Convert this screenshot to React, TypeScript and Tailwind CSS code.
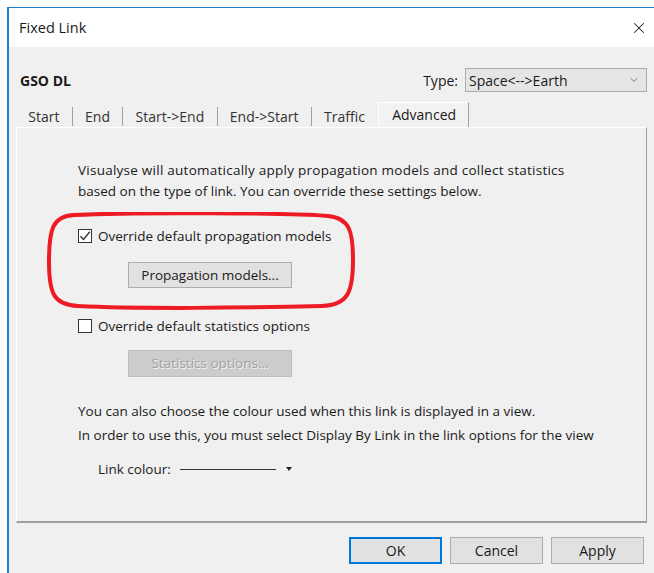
import { ChevronDown, X } from 'lucide-react';

const tabs = ['Start', 'End', 'Start->End', 'End->Start', 'Traffic'];

const CheckBox = ({ checked, label }: { checked?: boolean; label: string }) => (
  <div className="flex items-center h-[20px]">
    <div className="w-[14px] h-[14px] border border-[#333] bg-white flex items-center justify-center">
      {checked && (
        <svg width="12" height="12" viewBox="0 0 12 12">
          <path d="M1.5 6.2 L4.5 9.5 L10.8 1.8" fill="none" stroke="#333" strokeWidth="1.4" />
        </svg>
      )}
    </div>
    <span className="ml-[6px] text-[#1a1a1a]">{label}</span>
  </div>
);

const DialogButton = ({ label, primary }: { label: string; primary?: boolean }) => (
  <button
    className={`h-[27px] w-[93px] bg-[#e1e1e1] text-[14px] text-[#1a1a1a] ${
      primary ? 'border-2 border-[#0078d7]' : 'border border-[#adadad]'
    }`}
  >
    {label}
  </button>
);

export default function App() {
  return (
    <div
      className="w-[654px] h-[573px] bg-white overflow-hidden text-[13.5px] leading-[21px]"
      style={{ fontFamily: '"Open Sans", "Noto Sans", sans-serif' }}
    >
      <div className="ml-[7px] mt-[7px] h-[566px] border-l-2 border-t border-[#1883d7] flex flex-col">
        {/* Title bar */}
        <div className="h-[39px] bg-white flex items-center justify-between pl-[10px] pr-[6px]">
          <span className="text-[14.5px] text-[#1a1a1a]">Fixed Link</span>
          <X className="w-[18px] h-[18px] text-[#222]" strokeWidth={1.4} />
        </div>

        <div className="flex-1 bg-[#f0f0f0] flex flex-col">
          {/* Header row */}
          <div className="flex items-center justify-between pl-[11px] pr-[7px] mt-[21px] h-[24px] text-[14px]">
            <span className="font-bold text-[#1a1a1a]">GSO DL</span>
            <div className="flex items-center">
              <span className="mr-[7px] text-[#1a1a1a]">Type:</span>
              <div className="w-[182px] h-[24px] bg-[#e5e5e5] border border-[#adadad] flex items-center justify-between pl-[3px] pr-[6px]">
                <span className="text-[#1a1a1a]">Space&lt;--&gt;Earth</span>
                <ChevronDown className="w-[12px] h-[12px] text-[#555]" strokeWidth={1.5} />
              </div>
            </div>
          </div>

          {/* Tab strip */}
          <div className="flex items-end ml-[7px] mt-[10px] h-[25px] text-[14px]">
            {tabs.map((t, i) => (
              <div key={t} className="flex items-center h-[21px]">
                <span className="px-[12.3px] text-[#333]">{t}</span>
                {i < tabs.length - 1 && <div className="w-px h-[19px] bg-[#a0a0a0]" />}
              </div>
            ))}
            <div className="h-[26px] ml-[1px] pl-[13px] pr-[12px] pb-[3px] flex items-center bg-[#f2f2f2] border-t border-l border-white border-r border-r-[#a0a0a0] text-[#1a1a1a] relative top-px">
              Advanced
            </div>
          </div>

          {/* Tab page */}
          <div className="ml-[7px] w-[631px] h-[396px] border-t border-l border-white border-r border-r-[#a0a0a0] border-b-2 border-b-[#a0a0a0] pl-[61px] pt-[32px] text-[#1a1a1a] relative">
            <p className="tracking-[0.25px]">Visualyse will automatically apply propagation models and collect statistics</p>
            <p>based on the type of link. You can override these settings below.</p>

            <div className="mt-[24px]">
              <CheckBox checked label="Override default propagation models" />
            </div>
            <div className="mt-[16px] ml-[50px]">
              <button className="h-[26px] w-[164px] bg-[#e1e1e1] border border-[#adadad]">Propagation models...</button>
            </div>

            <div className="mt-[28px]">
              <CheckBox label="Override default statistics options" />
            </div>
            <div className="mt-[14px] ml-[50px]">
              <button className="h-[27px] w-[164px] bg-[#cccccc] border border-[#bfbfbf] text-[#a3a3a3] [text-shadow:1px_1px_0_#f4f4f4]">
                Statistics options...
              </button>
            </div>

            <div className="mt-[22px] leading-[24px]">
              <p>You can also choose the colour used when this link is displayed in a view.</p>
              <p>In order to use this, you must select Display By Link in the link options for the view</p>
            </div>

            <div className="mt-[12px] ml-[20px] flex items-center h-[20px]">
              <span>Link colour:</span>
              <div className="ml-[9px] w-[96px] h-px bg-[#333]" />
              <div className="ml-[10px] w-0 h-0 border-l-[3px] border-r-[3px] border-t-[4px] border-l-transparent border-r-transparent border-t-[#222]" />
            </div>

            {/* red highlight around the propagation options */}
            <svg className="absolute left-[29px] top-[84px]" width="310" height="98" viewBox="0 0 310 98">
              <path
                d="M28 3 C90 0 250 1 282 4 C304 6 307 20 307 48 C307 80 302 93 276 94 C200 96 90 97 32 94 C8 93 3 82 3 50 C3 18 6 4 28 3 Z"
                fill="none"
                stroke="#ed1c24"
                strokeWidth="4"
              />
            </svg>
          </div>

          {/* Dialog buttons */}
          <div className="flex justify-end gap-[8px] mt-[14px] pr-[10px]">
            <DialogButton label="OK" primary />
            <DialogButton label="Cancel" />
            <DialogButton label="Apply" />
          </div>
        </div>
      </div>
    </div>
  );
}
